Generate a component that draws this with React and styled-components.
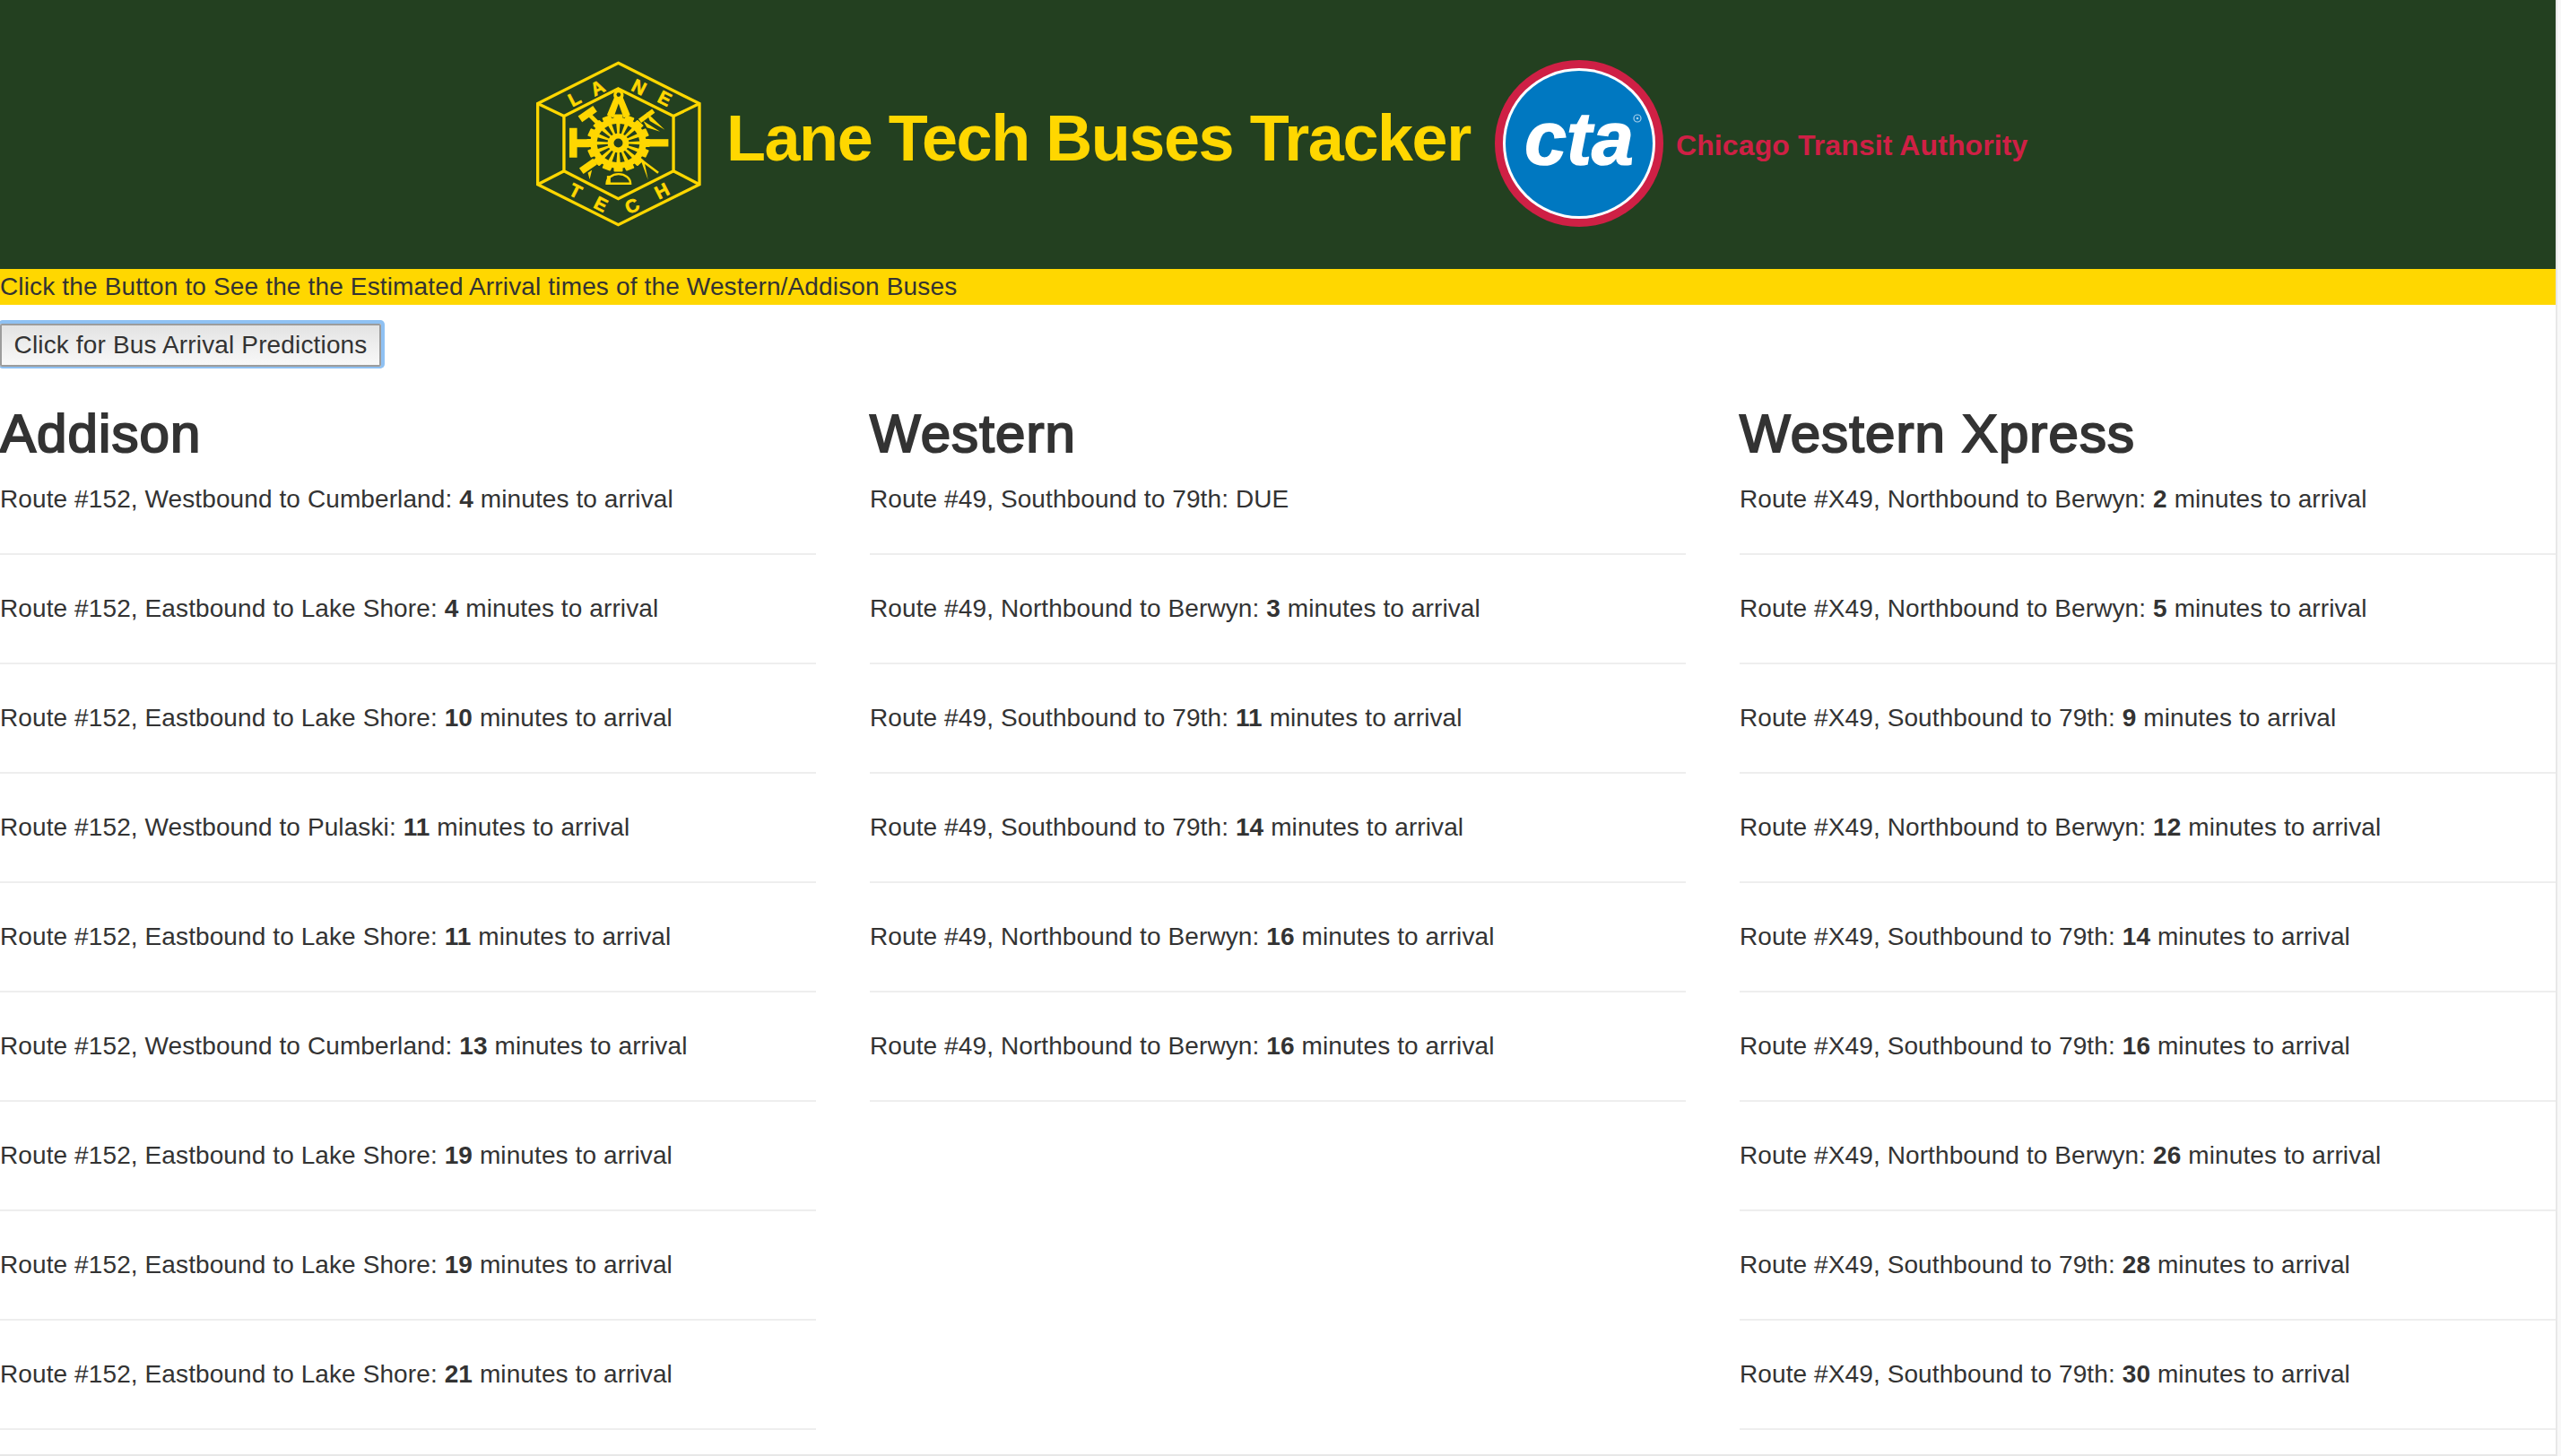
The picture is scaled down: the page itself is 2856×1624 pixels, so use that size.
import React from 'react';
import styled, { createGlobalStyle } from 'styled-components';

const GlobalStyle = createGlobalStyle`
  html, body {
    margin: 0;
    padding: 0;
    height: 100%;
    overflow: hidden;
    background: #f8f8f8;
    font-family: "Liberation Sans", Arial, sans-serif;
    color: #333;
  }
`;

const addison = [
  ['Westbound to Cumberland', '4'],
  ['Eastbound to Lake Shore', '4'],
  ['Eastbound to Lake Shore', '10'],
  ['Westbound to Pulaski', '11'],
  ['Eastbound to Lake Shore', '11'],
  ['Westbound to Cumberland', '13'],
  ['Eastbound to Lake Shore', '19'],
  ['Eastbound to Lake Shore', '19'],
  ['Eastbound to Lake Shore', '21'],
];

const western = [
  ['Southbound to 79th', 'DUE'],
  ['Northbound to Berwyn', '3'],
  ['Southbound to 79th', '11'],
  ['Southbound to 79th', '14'],
  ['Northbound to Berwyn', '16'],
  ['Northbound to Berwyn', '16'],
];

const xpress = [
  ['Northbound to Berwyn', '2'],
  ['Northbound to Berwyn', '5'],
  ['Southbound to 79th', '9'],
  ['Northbound to Berwyn', '12'],
  ['Southbound to 79th', '14'],
  ['Southbound to 79th', '16'],
  ['Northbound to Berwyn', '26'],
  ['Southbound to 79th', '28'],
  ['Southbound to 79th', '30'],
];

const columns = [
  { title: 'Addison', route: '#152', rows: addison },
  { title: 'Western', route: '#49', rows: western },
  { title: 'Western Xpress', route: '#X49', rows: xpress },
];

const gearTeeth = Array.from({ length: 16 }, (_, i) => i * 22.5);
const gearStretch = 'translate(390 358) scale(1.08 0.98) translate(-390 -358)';

function LaneLogo() {
  return (
    <LogoSvg viewBox="100 80 580 565">
      <g fill="none" stroke="#ffd700" strokeWidth="10" strokeLinejoin="miter">
        <path d="M390 90 L662 226 V497 L390 632 L120 497 V226 Z" />
        <path d="M390 176 L575 268 V452 L390 545 L208 452 V268 Z" />
        <path d="M120 226 L208 268 M662 226 L575 268 M120 497 L208 452 M662 497 L575 452" />
      </g>

      <g
        fill="#ffd700"
        stroke="#ffd700"
        strokeWidth="2"
        fontFamily="'Liberation Sans', sans-serif"
        fontSize="62"
        fontWeight="700"
        textAnchor="middle"
      >
        <text transform="translate(253 229) rotate(-27)">L</text>
        <text transform="translate(330 192) rotate(-27)">A</text>
        <text transform="translate(450 190) rotate(27)">N</text>
        <text transform="translate(536 228) rotate(27)">E</text>
        <text transform="translate(237 538) rotate(27)">T</text>
        <text transform="translate(322 582) rotate(27)">E</text>
        <text transform="translate(446 588) rotate(-27)">C</text>
        <text transform="translate(546 538) rotate(-27)">H</text>
      </g>

      <g fill="#ffd700">
        <g transform={gearStretch}>
          {gearTeeth.map((a) => (
            <rect key={a} x="376" y="260" width="28" height="24" rx="3" transform={`rotate(${a} 390 358)`} />
          ))}
          <circle cx="390" cy="358" r="87" />
        </g>
        <path d="M226 308 H252 V345 H292 V372 H252 V407 H226 Z" />
        <path d="M480 345 H558 V370 H480 Z" />
        <path d="M376 206 A17 17 0 1 1 406 206 L430 264 L408 274 L391 226 L374 274 L352 264 Z" />
      </g>

      <g stroke="#ffd700" fill="none">
        <path d="M262 278 L312 243" strokeWidth="24" />
        <path d="M292 262 L326 296" strokeWidth="14" />
        <path d="M462 284 L508 250" strokeWidth="16" />
        <path d="M266 452 L312 420" strokeWidth="24" />
        <path d="M468 416 L524 458" strokeWidth="8" />
      </g>

      <g fill="#ffd700">
        <path d="M484 254 L546 314 L496 284 Z" />
        <path d="M474 284 L530 320 L486 306 Z" />
        <path d="M288 458 L302 448 L294 480 Z" />
        <path d="M464 412 L478 424 L490 482 Z" />
      </g>

      <g fill="#234020" transform={gearStretch}>
        {gearTeeth.map((a) => (
          <path key={a} d="M387 325 L393 325 L397 292 L383 292 Z" transform={`rotate(${a + 11} 390 358)`} />
        ))}
      </g>
      <circle cx="390" cy="358" r="15" fill="#234020" />
      <circle cx="391" cy="196" r="7" fill="#234020" />

      <path d="M351 494 A40 32 0 0 1 431 494 Z" fill="none" stroke="#ffd700" strokeWidth="7" />
      <path d="M358 468 V494" stroke="#ffd700" strokeWidth="12" />
    </LogoSvg>
  );
}

function CtaLogo() {
  return (
    <CtaSvg viewBox="0 0 188 186">
      <ellipse cx="94" cy="93" rx="94" ry="93" fill="#cf2045" />
      <ellipse cx="94" cy="93" rx="85" ry="84" fill="#fff" />
      <ellipse cx="94" cy="93" rx="82" ry="81" fill="#0078c1" />
      <text
        x="94"
        y="116"
        fill="#fff"
        stroke="#fff"
        strokeWidth="1.5"
        fontFamily="'Liberation Sans', sans-serif"
        fontSize="84"
        fontWeight="700"
        fontStyle="italic"
        textAnchor="middle"
      >
        cta
      </text>
      <circle cx="159" cy="65" r="4" fill="none" stroke="#a8d0ec" strokeWidth="1.2" />
      <circle cx="159" cy="65" r="1.3" fill="#a8d0ec" />
    </CtaSvg>
  );
}

export default function App() {
  return (
    <Page>
      <GlobalStyle />
      <Header>
        <LaneLogo />
        <Title>Lane Tech Buses Tracker</Title>
        <CtaLogo />
        <Authority>Chicago Transit Authority</Authority>
      </Header>
      <Banner>Click the Button to See the the Estimated Arrival times of the Western/Addison Buses</Banner>
      <Toolbar>
        <PredictButton>Click for Bus Arrival Predictions</PredictButton>
      </Toolbar>
      <Columns>
        {columns.map((col) => (
          <Column key={col.title}>
            <RouteName>{col.title}</RouteName>
            {col.rows.map(([dest, time], i) => (
              <Prediction key={i}>
                Route {col.route}, {dest}:{' '}
                {time === 'DUE' ? time : (
                  <>
                    <b>{time}</b> minutes to arrival
                  </>
                )}
              </Prediction>
            ))}
          </Column>
        ))}
      </Columns>
    </Page>
  );
}

const Page = styled.div`
  box-sizing: border-box;
  width: 2852px;
  height: 1624px;
  background: #fff;
  border-right: 2px solid #e8e8e8;
  border-bottom: 2px solid #e8e8e8;
  overflow: hidden;
`;

const Header = styled.header`
  display: flex;
  align-items: center;
  height: 300px;
  padding-left: 593px;
  background: #234020;
`;

const LogoSvg = styled.svg`
  width: 193px;
  height: 188px;
  margin: 21px 24px 0 0;
  flex: none;
`;

const Title = styled.h1`
  width: 857px;
  margin: 7px 0 0;
  font-size: 72px;
  font-weight: 700;
  line-height: 80px;
  letter-spacing: -1.45px;
  color: #ffd700;
  white-space: nowrap;
`;

const CtaSvg = styled.svg`
  width: 188px;
  height: 186px;
  margin-top: 20px;
  flex: none;
`;

const Authority = styled.div`
  margin: 24px 0 0 14px;
  font-size: 32px;
  font-weight: 700;
  letter-spacing: 0.1px;
  color: #cf2045;
  white-space: nowrap;
`;

const Banner = styled.div`
  height: 40px;
  background: #ffd700;
  font-size: 28px;
  line-height: 40px;
  letter-spacing: 0.15px;
`;

const Toolbar = styled.div`
  padding-top: 21px;
`;

const PredictButton = styled.button`
  display: block;
  box-sizing: border-box;
  width: 425px;
  height: 48px;
  padding: 0;
  border: 2px solid #9c9c9c;
  border-radius: 2px;
  background: linear-gradient(#e3e3e3, #f8f8f8);
  box-shadow: 1px -1px 0 3px #8fc1f3;
  font-family: inherit;
  font-size: 28px;
  letter-spacing: 0.15px;
  color: #333;
`;

const Columns = styled.main`
  display: grid;
  grid-template-columns: repeat(3, 910px);
  column-gap: 60px;
  margin-top: 42px;
`;

const Column = styled.section``;

const RouteName = styled.h2`
  margin: 0 0 20px;
  font-size: 60px;
  font-weight: 400;
  line-height: 66px;
  letter-spacing: 1.1px;
  -webkit-text-stroke: 2.1px #333;
`;

const Prediction = styled.p`
  margin: 0 0 40px;
  padding-bottom: 40px;
  border-bottom: 2px solid #eee;
  font-size: 28px;
  line-height: 40px;
  letter-spacing: 0.1px;

  b {
    font-weight: 700;
  }
`;
